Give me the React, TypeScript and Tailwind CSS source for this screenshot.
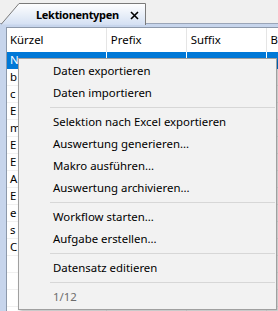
import React from "react";

const rows = ["N", "b", "c", "E", "m", "E", "E", "A", "E", "e", "s", "C", "", "", "", ""];

type Item = { label: string; sep?: boolean; muted?: boolean };

const items: Item[] = [
  { label: "Daten exportieren" },
  { label: "Daten importieren" },
  { label: "", sep: true },
  { label: "Selektion nach Excel exportieren" },
  { label: "Auswertung generieren..." },
  { label: "Makro ausführen..." },
  { label: "Auswertung archivieren..." },
  { label: "", sep: true },
  { label: "Workflow starten..." },
  { label: "Aufgabe erstellen..." },
  { label: "", sep: true },
  { label: "Datensatz editieren" },
  { label: "", sep: true },
  { label: "1/12", muted: true },
];

const ContextMenu: React.FC = () => (
  <div className="absolute left-[18px] top-[58px] w-[259px] border border-[#a0a0a0] bg-[#f2f2f2] py-[1px] text-[11.4px] shadow-[2px_2px_3px_rgba(0,0,0,0.25)]">
    {items.map((it, i) =>
      it.sep ? (
        <div key={i} className="flex h-[7px] items-center pl-[31px] pr-[1px]">
          <div className="h-px w-full bg-[#d7d7d7]" />
        </div>
      ) : (
        <div
          key={i}
          className={
            "flex h-[22px] items-center pl-[34px] " +
            (it.muted ? "text-[#6d6d6d]" : "text-black")
          }
        >
          {it.label}
        </div>
      )
    )}
  </div>
);

const App: React.FC = () => (
  <div className="relative h-[311px] w-[278px] overflow-hidden bg-[#f0f0f0] font-['Noto_Sans',sans-serif] text-[11.4px] leading-none">
    {/* tab strip */}
    <div className="relative h-[24px] border-b border-[#9aa5b8]">
      <div className="absolute left-[1px] top-[3px] h-[22px] w-[145px]">
        <svg width="145" height="22" className="absolute inset-0">
          <defs>
            <linearGradient id="tabg" x1="0" y1="0" x2="0" y2="1">
              <stop offset="0" stopColor="#ffffff" />
              <stop offset="1" stopColor="#d4e0f3" />
            </linearGradient>
          </defs>
          <path d="M0 21.5 L18 0.5 L144.5 0.5 L144.5 22" fill="url(#tabg)" stroke="#7a7a7a" />
        </svg>
        <div className="relative flex h-full items-center pl-[35px] pt-[1px]">
          <span className="whitespace-nowrap text-[11px] font-bold tracking-[-0.3px] text-black">Lektionentypen</span>
          <svg width="9" height="9" viewBox="0 0 9 9" className="ml-[11px] mt-[1px] shrink-0">
            <path d="M1 1 L8 8 M8 1 L1 8" stroke="#000" strokeWidth="1.6" />
          </svg>
        </div>
      </div>
    </div>

    {/* grid frame */}
    <div className="bg-[#c7d5ec] pl-[6px] pt-[3px]">
      <div className="h-[300px] border-l border-t border-[#8d99ab] bg-white">
        <div className="flex h-[24px] items-center">
          <div className="flex h-full w-[100px] items-center border-r border-[#e5e5e5] pl-[3px]">Kürzel</div>
          <div className="flex h-full w-[80px] items-center border-r border-[#e5e5e5] pl-[4px]">Prefix</div>
          <div className="flex h-full w-[80px] items-center border-r border-[#e5e5e5] pl-[4px]">Suffix</div>
          <div className="flex h-full items-center pl-[4px]">B</div>
        </div>
        {rows.map((r, i) => (
          <div
            key={i}
            className={
              "flex h-[17px] items-center border-b " +
              (i === 0 ? "border-[#0078d7] bg-[#0078d7] text-white" : "border-[#f0f0f0]")
            }
          >
            <div className={"flex h-full w-[100px] items-center pl-[3px] " + (i === 0 ? "border-r border-white" : "border-r border-[#f0f0f0]")}>{r}</div>
            <div className={"h-full w-[80px] " + (i === 0 ? "border-r border-white" : "border-r border-[#f0f0f0]")} />
            <div className={"h-full w-[80px] " + (i === 0 ? "border-r border-white" : "border-r border-[#f0f0f0]")} />
          </div>
        ))}
      </div>
    </div>

    <ContextMenu />
  </div>
);

export default App;
